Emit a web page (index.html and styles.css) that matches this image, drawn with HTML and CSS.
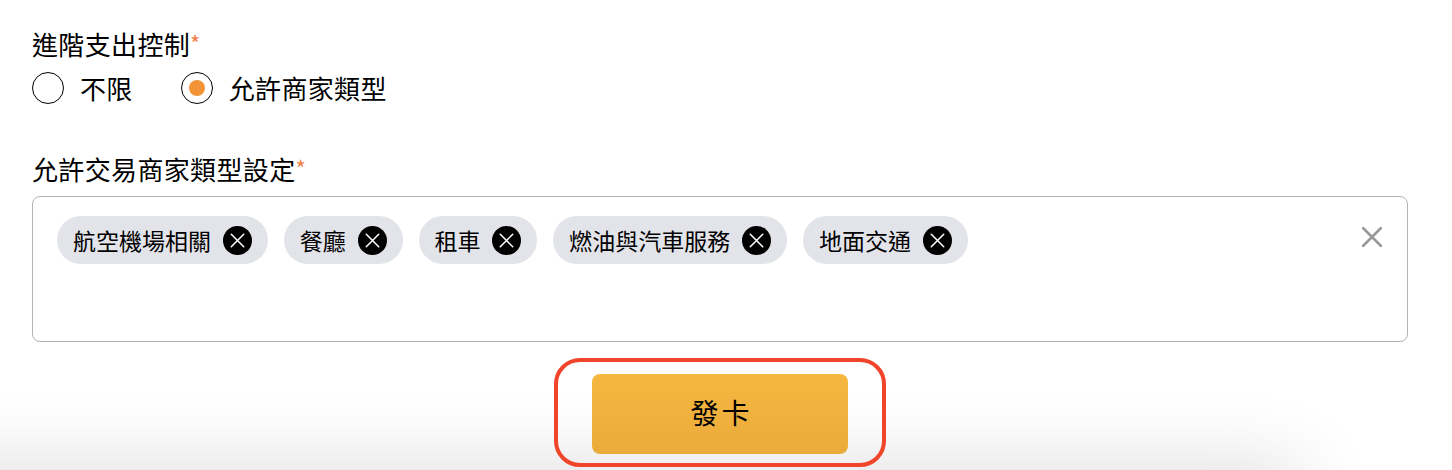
FILE: index.html
```html
<!DOCTYPE html>
<html lang="zh-Hant">
<head>
  <meta charset="UTF-8">
  <meta name="viewport" content="width=device-width, initial-scale=1.0">
  <title>發卡</title>
  <link rel="stylesheet" href="styles.css">
</head>
<body>
  <form class="card-form">
    <div class="field">
      <div class="field-label">進階支出控制<span class="required">*</span></div>
      <div class="radio-group">
        <label class="radio">
          <span class="radio-dot"></span>
          <span>不限</span>
        </label>
        <label class="radio checked">
          <span class="radio-dot"></span>
          <span>允許商家類型</span>
        </label>
      </div>
    </div>

    <div class="field merchant-field">
      <div class="field-label">允許交易商家類型設定<span class="required">*</span></div>
      <div class="multi-select">
        <div class="chip-list">
          <span class="chip">航空機場相關<span class="chip-remove"><svg viewBox="0 0 28 28"><path d="M8 8l12 12M20 8L8 20"/></svg></span></span>
          <span class="chip">餐廳<span class="chip-remove"><svg viewBox="0 0 28 28"><path d="M8 8l12 12M20 8L8 20"/></svg></span></span>
          <span class="chip">租車<span class="chip-remove"><svg viewBox="0 0 28 28"><path d="M8 8l12 12M20 8L8 20"/></svg></span></span>
          <span class="chip">燃油與汽車服務<span class="chip-remove"><svg viewBox="0 0 28 28"><path d="M8 8l12 12M20 8L8 20"/></svg></span></span>
          <span class="chip">地面交通<span class="chip-remove"><svg viewBox="0 0 28 28"><path d="M8 8l12 12M20 8L8 20"/></svg></span></span>
        </div>
        <svg class="clear-all" viewBox="0 0 20 20"><path d="M1 1l18 18M19 1L1 19"/></svg>
      </div>
    </div>

    <div class="actions">
      <div class="highlight">
        <button type="button" class="submit-button">發卡</button>
      </div>
    </div>
  </form>
  <div class="bottom-shadow"></div>
</body>
</html>
```

FILE: styles.css
```css
html, body {
  height: 100%;
}

body {
  margin: 0;
  background-color: #fff;
  color: #000;
  font-family: "Noto Sans CJK TC", "Noto Sans", sans-serif;
  overflow: hidden;
  position: relative;
}

.card-form {
  display: flex;
  flex-direction: column;
  padding: 25px 44px 0 32px;
  position: relative;
  z-index: 1;
}

.field-label {
  font-size: 26px;
  line-height: 34px;
  letter-spacing: 0.35px;
}

.required {
  color: #f2814a;
  font-size: 22px;
  letter-spacing: 0;
  vertical-align: 3px;
}

.radio-group {
  display: flex;
  gap: 48px;
  margin-top: 11px;
}

.radio {
  display: flex;
  align-items: center;
  gap: 16px;
  font-size: 26px;
  line-height: 32px;
  letter-spacing: 0.35px;
}

.radio-dot {
  width: 32px;
  height: 32px;
  box-sizing: border-box;
  border: 1px solid #000;
  border-radius: 50%;
  display: flex;
  align-items: center;
  justify-content: center;
}

.radio.checked .radio-dot::after {
  content: "";
  width: 16px;
  height: 16px;
  border-radius: 50%;
  background-color: #f39237;
}

.merchant-field {
  margin-top: 46px;
}

.multi-select {
  margin-top: 10px;
  height: 146px;
  box-sizing: border-box;
  border: 1px solid #b3b3b3;
  border-radius: 8px;
  padding: 19px 24px;
  display: flex;
  justify-content: space-between;
  align-items: flex-start;
}

.chip-list {
  display: flex;
  flex-wrap: wrap;
  gap: 16px;
}

.chip {
  display: flex;
  align-items: center;
  height: 48px;
  padding: 0 16px;
  border-radius: 24px;
  background-color: #e3e4e9;
  font-size: 23px;
  gap: 11.75px;
}

.chip-remove {
  width: 29px;
  height: 29px;
  border-radius: 50%;
  background-color: #000;
}

.chip-remove svg {
  display: block;
  width: 100%;
  height: 100%;
}

.chip-remove path {
  stroke: #fff;
  stroke-width: 1.5;
  stroke-linecap: round;
  fill: none;
}

.clear-all {
  width: 20px;
  height: 20px;
  margin-top: 11px;
  margin-right: 1px;
}

.clear-all path {
  stroke: #999;
  stroke-width: 2.6;
  stroke-linecap: round;
  fill: none;
}

.actions {
  display: flex;
  justify-content: center;
  margin-top: 16px;
}

.highlight {
  box-sizing: border-box;
  width: 332px;
  height: 109px;
  border: 4px solid #f0452a;
  border-radius: 26px;
  padding: 12px 32px 12px 33px;
}

.submit-button {
  display: block;
  width: 256px;
  height: 80px;
  margin-left: 1px;
  padding: 0 0 5px 3px;
  border: none;
  border-radius: 8px;
  background: linear-gradient(#f6b740, #ebab3b);
  color: #000;
  font-family: inherit;
  font-size: 28px;
  letter-spacing: 3px;
}

/* shadow of the sticky bar just under the window */
.bottom-shadow {
  position: absolute;
  left: -70px;
  bottom: 0;
  width: 1340px;
  height: 0;
  box-shadow: 0 30px 80px 30px rgba(0, 0, 0, 0.16);
}
```
